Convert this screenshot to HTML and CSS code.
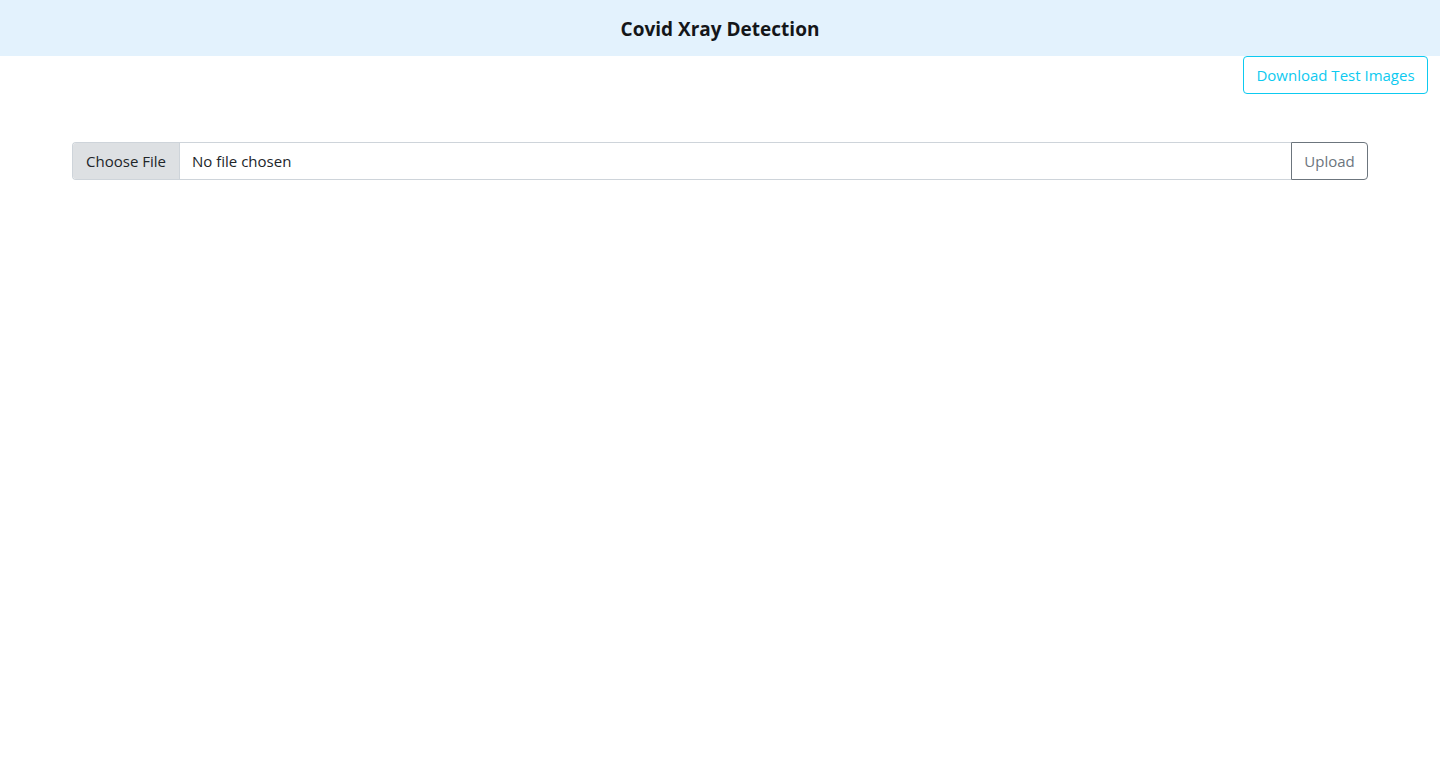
FILE: index.html
```html
<!DOCTYPE html>
<html lang="en">
<head>
  <meta charset="UTF-8">
  <meta name="viewport" content="width=device-width, initial-scale=1">
  <title>Covid Xray Detection</title>
  <link rel="stylesheet" href="styles.css">
</head>
<body>
  <!-- Navbar -->
  <nav class="navbar">
    <span class="navbar-brand">Covid Xray Detection</span>
  </nav>

  <div class="toolbar">
    <a href="#" class="btn btn-outline-info">Download Test Images</a>
  </div>

  <!-- Upload Form -->
  <div class="container">
    <form class="input-group" onsubmit="return false">
      <input type="file" class="form-control" name="file">
      <button type="submit" class="btn btn-outline-secondary">Upload</button>
    </form>
  </div>
</body>
</html>
```

FILE: styles.css
```css
/* Reset and Base Styles */
* {
  margin: 0;
  padding: 0;
  box-sizing: border-box;
}
body {
  font-family: 'Open Sans', 'Noto Sans', sans-serif;
  font-size: 15px;
  line-height: 1.5;
  color: #212529;
  background: #fff;
}

.navbar {
  height: 56px;
  display: flex;
  align-items: center;
  justify-content: center;
  padding-top: 2px;
  background: #e3f2fd;
}
.navbar-brand {
  font-size: 19px;
  font-weight: 700;
  color: #141619;
}

.toolbar {
  display: flex;
  justify-content: flex-end;
  padding-right: 12px;
}

.btn {
  display: inline-block;
  height: 38px;
  padding: 0 12px;
  font-family: inherit;
  font-size: 15px;
  line-height: 36px;
  text-decoration: none;
  background: transparent;
  border: 1px solid;
  border-radius: 4px;
  cursor: pointer;
}
.btn-outline-info {
  width: 185px;
  text-align: center;
  color: #0dcaf0;
  border-color: #0dcaf0;
}
.btn-outline-secondary {
  width: 77px;
  color: #6c757d;
  border-color: #6c757d;
  border-radius: 0 4px 4px 0;
}

.container {
  max-width: 1320px;
  margin: 48px auto 0;
  padding: 0 12px;
}
.input-group {
  display: flex;
  height: 38px;
}
.form-control {
  flex: 1;
  height: 38px;
  padding: 0 12px;
  font-family: inherit;
  font-size: 15px;
  line-height: 36px;
  color: #212529;
  border: 1px solid #ced4da;
  border-right: none;
  border-radius: 4px 0 0 4px;
  overflow: hidden;
}
.form-control::file-selector-button {
  height: 36px;
  width: 107px;
  margin: 0 12px 0 -12px;
  padding: 0 12px;
  font-family: inherit;
  font-size: 15px;
  color: #212529;
  background: #dde0e3;
  border: none;
  border-right: 1px solid #ced4da;
  border-radius: 0;
}
```
